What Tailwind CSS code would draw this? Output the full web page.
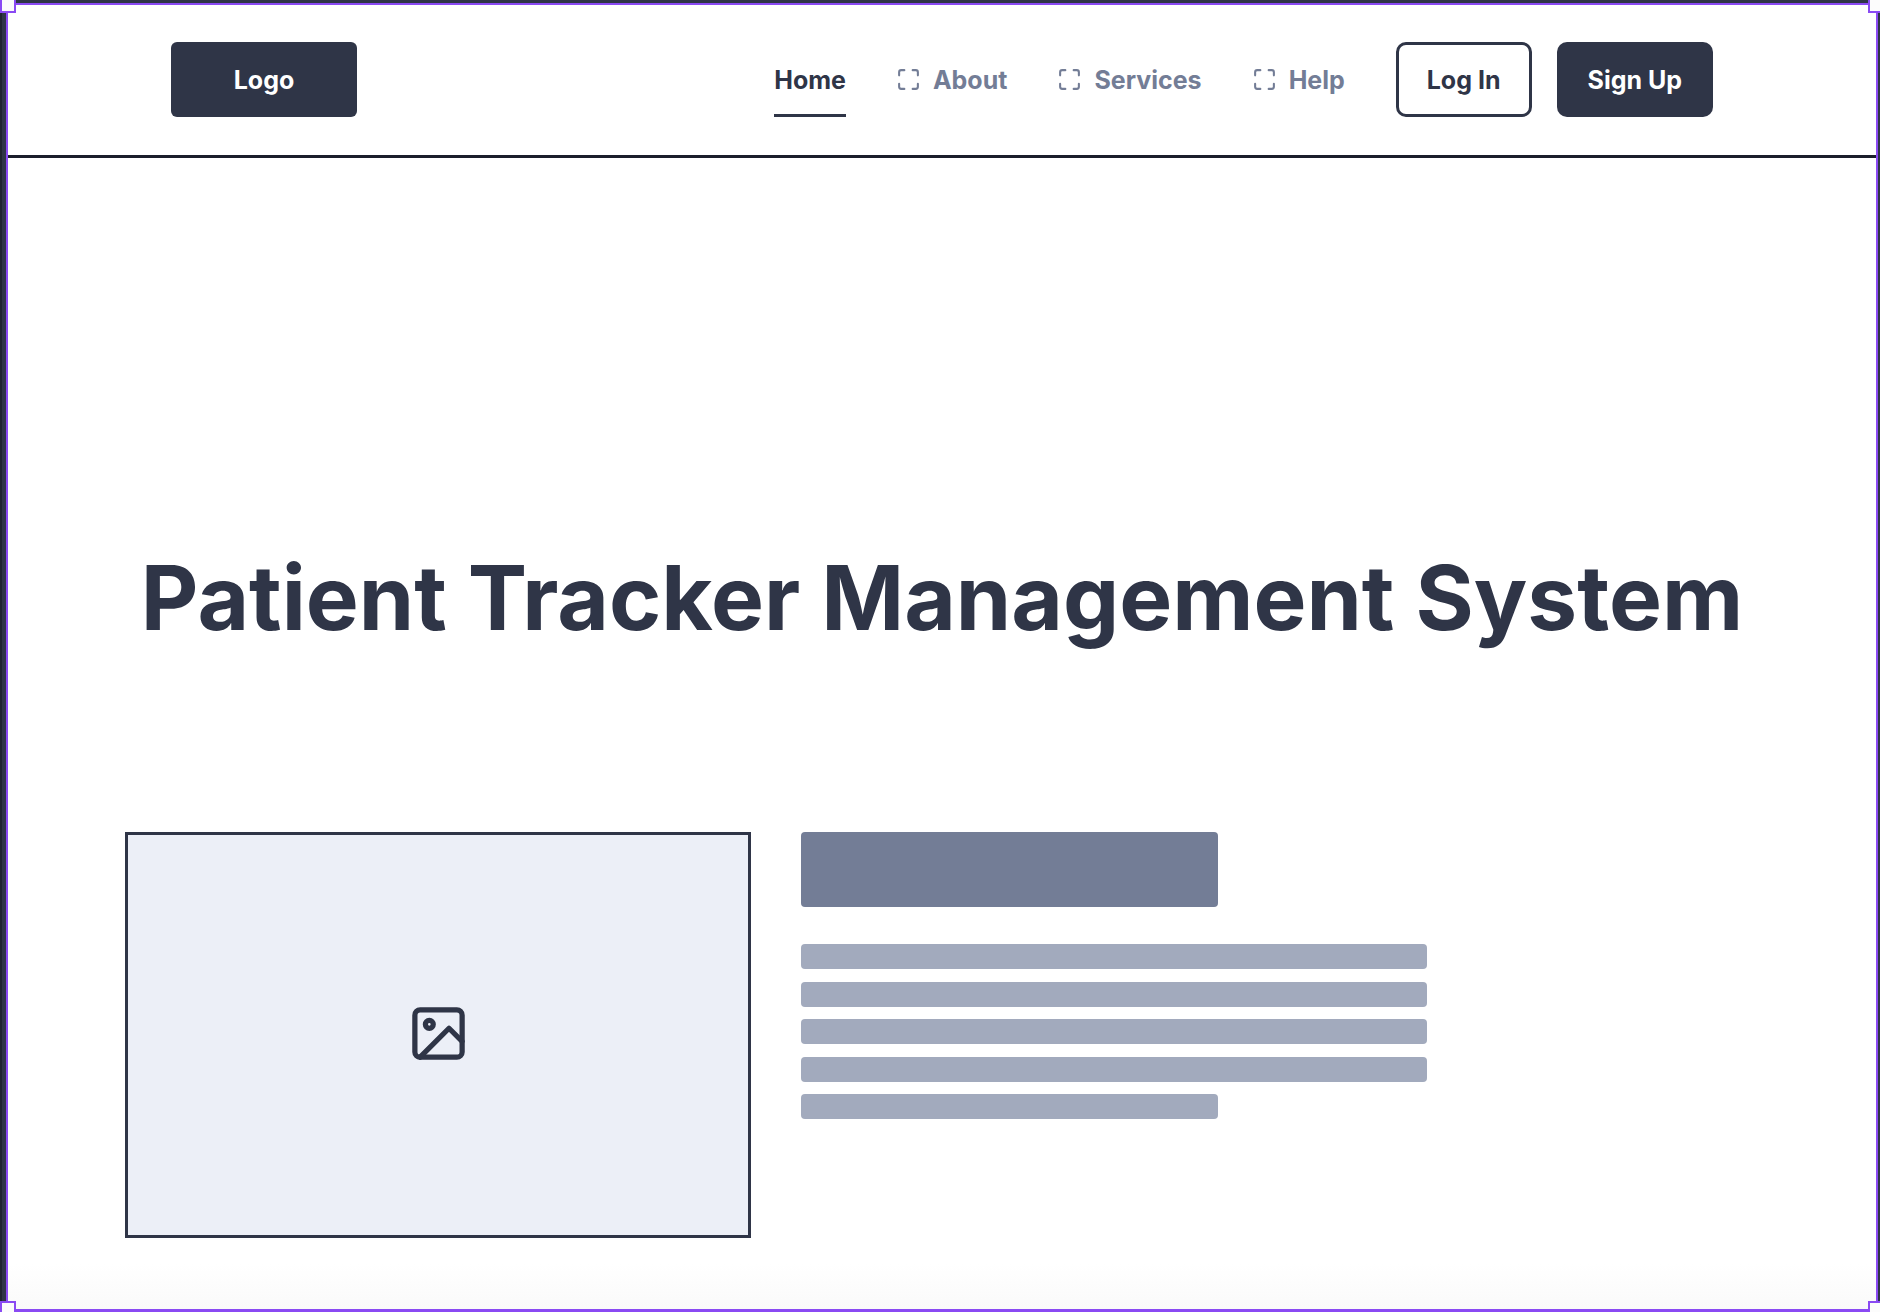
<!DOCTYPE html>
<html lang="en">
<head>
<meta charset="utf-8">
<meta name="viewport" content="width=device-width, initial-scale=1">
<title>Patient Tracker Management System</title>
<script src="https://cdn.jsdelivr.net/npm/@tailwindcss/browser@4"></script>
</head>
<body class="font-['Inter',sans-serif] text-[#2f3547]">
<svg class="hidden" aria-hidden="true">
  <symbol id="corners" viewBox="0 0 24 24"><path d="M8 3H5a2 2 0 0 0-2 2v3M21 8V5a2 2 0 0 0-2-2h-3M16 21h3a2 2 0 0 0 2-2v-3M3 16v3a2 2 0 0 0 2 2h3" fill="none" stroke="currentColor" stroke-width="2" stroke-linecap="round" stroke-linejoin="round"/></symbol>
</svg>

<!-- Selected frame on the dark canvas -->
<div class="relative flex min-h-screen flex-col overflow-hidden bg-[#2f3547] pt-[3px] pr-[2px] pl-[6px] shadow-[inset_2px_0_#1f2330]">
  <div class="flex grow flex-col border-2 border-b-3 border-[#8a4af3] bg-white">
    <header class="flex items-center justify-between border-b-3 border-[#1b1e2b] px-[163px] pt-[37px] pb-[38px] text-[25px] leading-[38px] font-bold">
      <a href="#" class="flex h-[75px] w-[186px] items-center justify-center rounded-md bg-[#2f3547] text-white">Logo</a>
      <div class="flex items-center gap-[51px]">
        <nav class="flex items-center gap-[50px] text-[#737d96]">
          <a href="#" class="flex h-[75px] items-center border-b-3 border-[#2f3547] pt-[3px] text-[#2f3547]">Home</a>
          <a href="#" class="flex items-center gap-3"><svg class="size-[25px]"><use href="#corners"/></svg>About</a>
          <a href="#" class="flex items-center gap-3"><svg class="size-[25px]"><use href="#corners"/></svg>Services</a>
          <a href="#" class="flex items-center gap-3"><svg class="size-[25px]"><use href="#corners"/></svg>Help</a>
        </nav>
        <div class="flex items-center gap-[25px]">
          <button class="h-[75px] rounded-[10px] border-3 border-[#2f3547] px-7">Log In</button>
          <button class="h-[75px] rounded-[10px] bg-[#2f3547] px-[31px] text-white">Sign Up</button>
        </div>
      </div>
    </header>

    <main class="flex grow flex-col bg-linear-to-t from-[#fafafa] to-white to-[45px] px-[117px] pt-[387px] pb-[60px]">
      <h1 class="text-center text-[89px] leading-[106px] font-bold whitespace-nowrap">Patient Tracker Management System</h1>
      <section class="mt-[181px] flex items-start gap-[50px]">
        <div class="flex h-[406px] w-[626px] items-center justify-center border-3 border-[#2f3547] bg-[#eceff7] pb-1">
          <svg class="size-[63px]" viewBox="0 0 24 24" fill="none" stroke="currentColor" stroke-width="2" stroke-linecap="round" stroke-linejoin="round" role="img" aria-label="Image"><rect x="3" y="3" width="18" height="18" rx="2"/><circle cx="8.5" cy="8.5" r="1.5"/><path d="M21 15l-5-5L5 21"/></svg>
        </div>
        <div class="w-[626px]">
          <div class="h-[75px] w-2/3 rounded bg-[#737d96]"></div>
          <div class="mt-[37px] flex h-[175px] flex-col justify-between">
            <div class="h-[25px] rounded bg-[#a2aabd]"></div>
            <div class="h-[25px] rounded bg-[#a2aabd]"></div>
            <div class="h-[25px] rounded bg-[#a2aabd]"></div>
            <div class="h-[25px] rounded bg-[#a2aabd]"></div>
            <div class="h-[25px] w-2/3 rounded bg-[#a2aabd]"></div>
          </div>
        </div>
      </section>
    </main>
  </div>

  <!-- Resize handles, clipped by the window edges -->
  <span class="absolute top-[-3px] left-0 size-4 border-2 border-[#8a4af3] bg-[#fcfcfc]"></span>
  <span class="absolute top-[-3px] right-[-4px] size-4 border-2 border-[#8a4af3] bg-[#fcfcfc]"></span>
  <span class="absolute bottom-[-5px] left-0 size-4 border-2 border-[#8a4af3] bg-[#fcfcfc]"></span>
  <span class="absolute right-[-4px] bottom-[-5px] size-4 border-2 border-[#8a4af3] bg-[#fcfcfc]"></span>
</div>
</body>
</html>
